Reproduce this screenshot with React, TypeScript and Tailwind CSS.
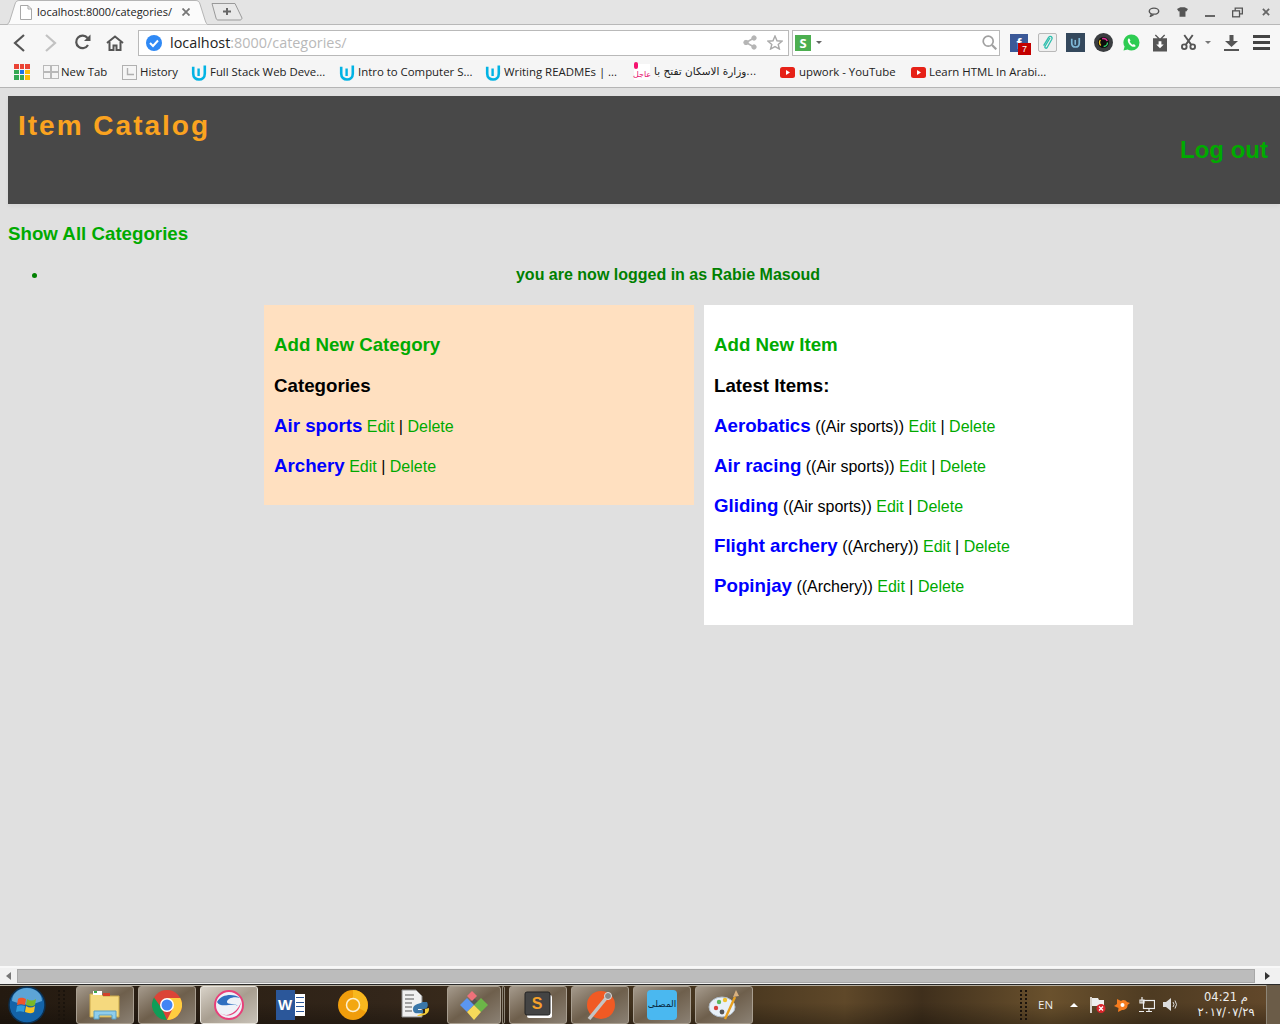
import React from 'react';

const uiFont = "font-['Open_Sans','Noto_Sans',sans-serif]";

const UdacityIcon = () => (
  <svg width="16" height="17" viewBox="0 0 16 17" className="shrink-0" fill="none" stroke="#02b3e4">
    <path d="M2.2 2.8 V9.5 C2.2 13.5 4.8 15.5 8 15.5 C11.2 15.5 13.8 13.5 13.8 9.5 V1.5" strokeWidth="2.6" />
    <path d="M7.6 4.5 V12" strokeWidth="2.4" />
  </svg>
);

const YoutubeIcon = () => (
  <svg width="15" height="11" viewBox="0 0 15 11" className="shrink-0">
    <rect width="15" height="11" rx="2.5" fill="#e62117" />
    <path d="M6 3 L10 5.5 L6 8 Z" fill="#fff" />
  </svg>
);

const AppsIcon = () => {
  const colors = ['#ea4335', '#ea4335', '#ea4335', '#34a853', '#1a73e8', '#fbbc05', '#34a853', '#34a853', '#fbbc05'];
  return (
    <div className="grid grid-cols-3 gap-[1px] w-4 h-4 shrink-0">
      {colors.map((c, i) => <div key={i} style={{ background: c }} />)}
    </div>
  );
};

const NewTabIcon = () => (
  <svg width="16" height="14" viewBox="0 0 16 14" className="shrink-0" fill="none" stroke="#b9b9b9">
    <rect x="0.5" y="0.5" width="7" height="6" />
    <rect x="8.5" y="0.5" width="7" height="6" />
    <rect x="0.5" y="7.5" width="7" height="6" />
    <rect x="8.5" y="7.5" width="7" height="6" />
  </svg>
);

const HistoryIcon = () => (
  <svg width="15" height="15" viewBox="0 0 15 15" className="shrink-0" fill="none" stroke="#b0b0b0">
    <rect x="0.5" y="0.5" width="14" height="14" />
    <path d="M5.5 3 V9.5 H12" strokeWidth="1.4" />
  </svg>
);

const PinkIcon = () => (
  <div className="relative w-[16px] h-[16px] bg-white flex items-end justify-center shrink-0 text-[8px] leading-[11px] text-[#e6116f] font-['DejaVu_Sans',sans-serif]">
    <div className="absolute left-0 top-[-2px] w-[4px] h-[7px] rounded-full bg-[#f5126f]" />
    عاجل
  </div>
);

const bookmarks = [
  { key: 'newtab', label: 'New Tab', icon: <NewTabIcon />, cls: 'w-[79px] gap-[2px]' },
  { key: 'history', label: 'History', icon: <HistoryIcon />, cls: 'w-[69px] gap-[3px]' },
  { key: 'fullstack', label: 'Full Stack Web Deve...', icon: <UdacityIcon />, cls: 'w-[148px] gap-[3px]' },
  { key: 'intro', label: 'Intro to Computer S...', icon: <UdacityIcon />, cls: 'w-[146px] gap-[3px]' },
  { key: 'readme', label: 'Writing READMEs | ...', icon: <UdacityIcon />, cls: 'w-[149px] gap-[3px]' },
  { key: 'arabic', label: 'وزارة الاسكان تفتح با...', icon: <PinkIcon />, cls: 'w-[146px] gap-[4px]' },
  { key: 'upwork', label: 'upwork - YouTube', icon: <YoutubeIcon />, cls: 'w-[131px] gap-[4px]' },
  { key: 'learn', label: 'Learn HTML In Arabi...', icon: <YoutubeIcon />, cls: 'gap-[3px]' },
];

const WindowControls = () => (
  <div className="ml-auto flex items-center h-full pr-[10px]">
    <svg width="12" height="10" viewBox="0 0 14 11" fill="none" stroke="#555" strokeWidth="1.7"><ellipse cx="7" cy="4.5" rx="5.5" ry="3.5" /><path d="M4 8 L3 10.5 L6.5 8.5" /></svg>
    <svg width="11" height="10" viewBox="0 0 13 11" className="ml-[17px]" fill="#555"><path d="M0 2 L4 0 H9 L13 2 L11 5 L10 4.5 V11 H3 V4.5 L2 5 Z" /></svg>
    <div className="w-[10px] h-[2px] bg-[#666] mt-[7px] ml-[17px]" />
    <svg width="11" height="11" viewBox="0 0 12 11" className="ml-[17px]" fill="none" stroke="#555" strokeWidth="1.4"><rect x="0.7" y="3.7" width="7.5" height="6.5" /><path d="M3.5 3.5 V0.7 H11.3 V7 H8.5" /></svg>
    <svg width="8" height="8" viewBox="0 0 9 9" className="ml-[19px]" stroke="#666" strokeWidth="2"><path d="M1 1 L8 8 M8 1 L1 8" /></svg>
  </div>
);

const TabStrip = () => (
  <div className="h-[24px] flex items-end bg-[#e4e4e4] pl-[5px]">
    <div className="relative w-[204px] h-[24px] flex items-center pl-[15px]">
      <svg width="204" height="25" viewBox="0 0 204 25" className="absolute left-0 top-0">
        <path d="M0 25 C3 25 4 23 5 20 L10 4 C11 1 12 0.5 15 0.5 H190 C193 0.5 194 1 195 4 L200 20 C201 23 202 25 204 25 Z" fill="#fbfbfb" stroke="#b5b5b5" />
      </svg>
      <svg width="12" height="15" viewBox="0 0 12 15" className="relative shrink-0" fill="#fff" stroke="#a8a8a8"><path d="M0.5 0.5 H8 L11.5 4 V14.5 H0.5 Z M8 0.5 V4 H11.5" /></svg>
      <span className={`relative ml-[5px] w-[140px] whitespace-nowrap text-[11px] text-[#222] ${uiFont}`}>localhost:8000/categories/</span>
      <svg width="8" height="8" viewBox="0 0 8 8" className="relative ml-[5px]" stroke="#777" strokeWidth="1.8"><path d="M0.5 0.5 L7.5 7.5 M7.5 0.5 L0.5 7.5" /></svg>
    </div>
    <svg width="32" height="18" viewBox="0 0 32 18" className="ml-[2px] mb-[3px]">
      <path d="M1 0.5 H24 L31 15 C31 16 30 17 29 17 H7 C6 17 5.5 16.5 5 15 Z" fill="#e8e8e8" stroke="#999" />
      <path d="M12 8.5 H20 M16 5 V12" stroke="#666" strokeWidth="2" />
    </svg>
    <WindowControls />
  </div>
);

const Toolbar = () => (
  <div className="h-[36px] flex items-center bg-[#f7f7f7] border-t border-[#b8b8b8] pl-[13px]">
    <svg width="12" height="18" viewBox="0 0 12 18" fill="none" stroke="#555" strokeWidth="2.2"><path d="M11 1 L2 9 L11 17" /></svg>
    <svg width="12" height="18" viewBox="0 0 12 18" className="ml-[20px]" fill="none" stroke="#c2c2c2" strokeWidth="2.2"><path d="M1 1 L10 9 L1 17" /></svg>
    <svg width="17" height="17" viewBox="0 0 17 17" className="ml-[17px]" fill="none" stroke="#555" strokeWidth="2.2"><path d="M14 11 A6.3 6.3 0 1 1 13.5 4" /><path d="M16.5 0.5 V7 H10 Z" fill="#555" stroke="none" /></svg>
    <svg width="18" height="16" viewBox="0 0 18 16" className="ml-[15px]" fill="none" stroke="#555" strokeWidth="2"><path d="M1 8 L9 1.5 L17 8" /><path d="M3.5 7 V15 H7.5 V10.5 H10.5 V15 H14.5 V7" /></svg>
    <div className="ml-[14px] w-[651px] h-[26px] flex items-center bg-white border border-[#b9b9b9] pl-[7px] pr-[5px]">
      <svg width="16" height="16" viewBox="0 0 16 16"><circle cx="8" cy="8" r="8" fill="#2f89f5" /><path d="M4 8 L7 11 L12 5.5" fill="none" stroke="#fff" strokeWidth="2" /></svg>
      <span className={`ml-[8px] text-[14.4px] text-[#222] ${uiFont}`}>localhost<span className="text-[#b9b9b9]">:8000/categories/</span></span>
      <svg width="14" height="15" viewBox="0 0 14 15" className="ml-auto" fill="#b5b5b5" stroke="#b5b5b5"><circle cx="11" cy="3" r="2.2" /><circle cx="3" cy="7.5" r="2.2" /><circle cx="11" cy="12" r="2.2" /><path d="M11 3 L3 7.5 L11 12" fill="none" strokeWidth="1.6" /></svg>
      <svg width="16" height="15" viewBox="0 0 16 15" className="ml-[10px]" fill="none" stroke="#a9a9a9" strokeWidth="1.4"><path d="M8 1 L10 5.8 L15 6.2 L11.2 9.4 L12.4 14 L8 11.6 L3.6 14 L4.8 9.4 L1 6.2 L6 5.8 Z" /></svg>
    </div>
    <div className="ml-[3px] w-[208px] h-[26px] flex items-center bg-white border border-[#b9b9b9] pl-[2px] pr-[2px]">
      <div className={`w-4 h-4 bg-[#4caf50] text-white text-[13px] font-bold leading-4 text-center ${uiFont}`}>S</div>
      <svg width="6" height="3" viewBox="0 0 6 3" className="ml-[5px]" fill="#666"><path d="M0 0 H6 L3 3 Z" /></svg>
      <svg width="15" height="15" viewBox="0 0 15 15" className="ml-auto" fill="none" stroke="#a0a0a0" strokeWidth="1.7"><circle cx="6.2" cy="6.2" r="5" /><path d="M10 10 L14.3 14.3" strokeWidth="2.2" /></svg>
    </div>
    <div className="ml-[10px] relative w-[18px] h-[18px] bg-[#3b5998] shrink-0 text-white text-[15px] font-bold leading-[20px] text-center font-['Liberation_Sans',sans-serif]">
      f
      <div className="absolute left-[8px] top-[9px] w-[13px] h-[12px] bg-[#c40000] text-[9px] leading-[12px] font-normal">7</div>
    </div>
    <div className="ml-[10px] w-[19px] h-[19px] rounded-[2px] border border-[#b9b9b9] bg-[#f0f0f0] flex items-center justify-center">
      <svg width="11" height="15" viewBox="0 0 11 15" fill="none" stroke="#2ebfae" strokeWidth="1.3"><path d="M8 3 L3.2 11 C2.2 13 4 14 5.2 12.5 L9.7 4.5 C11 2 8.2 0 6.6 2.4 L1.6 10.6" /></svg>
    </div>
    <div className="ml-[9px] w-[19px] h-[19px] bg-[#34485c] flex items-center justify-center">
      <svg width="11" height="11" viewBox="0 0 16 17" fill="none" stroke="#7fb8d6"><path d="M2.2 2.8 V9.5 C2.2 13.5 4.8 15.5 8 15.5 C11.2 15.5 13.8 13.5 13.8 9.5 V1.5" strokeWidth="2.6" /><path d="M7.6 4.5 V12" strokeWidth="2.4" /></svg>
    </div>
    <svg width="19" height="19" viewBox="0 0 19 19" className="ml-[9px]">
      <circle cx="9.5" cy="9.5" r="9.5" fill="#3a3d40" />
      <circle cx="9.5" cy="9.5" r="5.5" fill="#0c0c0c" />
      <circle cx="9.5" cy="9.5" r="4" fill="none" stroke="#2fd36b" strokeWidth="1.4" strokeDasharray="6 19" />
      <circle cx="9.5" cy="9.5" r="4" fill="none" stroke="#e0309a" strokeWidth="1.4" strokeDasharray="6 19" strokeDashoffset="8" />
      <circle cx="9.5" cy="9.5" r="4" fill="none" stroke="#f2c21d" strokeWidth="1.4" strokeDasharray="6 19" strokeDashoffset="16" />
    </svg>
    <svg width="17" height="17" viewBox="0 0 17 17" className="ml-[10px]">
      <path d="M8.5 0.5 A8 8 0 0 1 8.5 16.5 A8 8 0 0 1 4.6 15.5 L0.5 16.5 L1.6 12.6 A8 8 0 0 1 8.5 0.5 Z" fill="#2ecc52" />
      <path d="M5.5 4.5 C4 6 5 9 7 11 C9 13 11.5 13.5 12.8 12 L11 10 L9.8 10.8 C8.5 10.2 7 8.5 6.7 7.5 L7.5 6.5 L6.3 4.5 Z" fill="#fff" />
    </svg>
    <svg width="14" height="18" viewBox="0 0 15 18" className="ml-[13px]" fill="#555"><path d="M3 0 L7 4 H8 L12 0 L13 1 L10 4 H15 V18 H0 V4 H5 L2 1 Z" /><path d="M6 7 H9 V10.5 H11.5 L7.5 14.5 L3.5 10.5 H6 Z" fill="#fff" /></svg>
    <svg width="15" height="17" viewBox="0 0 16 17" className="ml-[14px]" fill="none" stroke="#555" strokeWidth="2"><circle cx="3.5" cy="13" r="2.5" /><circle cx="12.5" cy="13" r="2.5" /><path d="M5 11 L12.5 0.5 M11 11 L3.5 0.5" /></svg>
    <svg width="6" height="3" viewBox="0 0 6 3" className="ml-[9px]" fill="#777"><path d="M0 0 H6 L3 3 Z" /></svg>
    <svg width="15" height="16" viewBox="0 0 15 16" className="ml-[13px]" fill="#555"><path d="M5.5 0 H9.5 V6 H14 L7.5 12 L1 6 H5.5 Z" /><rect y="14" width="15" height="2" /></svg>
    <div className="ml-[14px] w-[17px] flex flex-col gap-[3px]">
      <div className="h-[3px] bg-[#444]" />
      <div className="h-[3px] bg-[#444]" />
      <div className="h-[3px] bg-[#444]" />
    </div>
  </div>
);

const BookmarksBar = () => (
  <div className="h-[28px] flex items-center bg-[#f5f5f5] border-b border-[#b5b5b5] pl-[14px] pb-[3px]">
    <div className="w-[29px]"><AppsIcon /></div>
    {bookmarks.map(b => (
      <div key={b.key} className={`flex items-center h-full ${b.cls}`}>
        {b.icon}
        <span className={`whitespace-nowrap text-[#222] ${b.key === 'arabic' ? "font-['DejaVu_Sans',sans-serif] text-[10.5px]" : `text-[11.4px] ${uiFont}`}`}>{b.label}</span>
      </div>
    ))}
  </div>
);

const CategoryRow = ({ name, parent }: { name: string; parent?: string }) => (
  <p className="mt-[17px] leading-[22px] text-[16px] text-black">
    <a className="text-[18.72px] font-bold text-[#0000ff]">{name}</a>{' '}
    {parent && <span>(({parent})) </span>}
    <a className="text-[#00aa00]">Edit</a> | <a className="text-[#00aa00]">Delete</a>
  </p>
);

const PageContent = () => (
  <div className="flex-1 overflow-hidden bg-[#e0e0e0] font-['Liberation_Sans',Arial,sans-serif]">
    <div className="w-[1288px] pl-[8px] pt-[8px]">
      <header className="h-[108px] w-[1272px] bg-[#484848] shadow-[0_2px_4px_rgba(0,0,0,0.05)] flex justify-between pl-[10px] pr-[12px]">
        <h1 className="mt-[14px] text-[28px] leading-[32px] font-bold tracking-[2px] text-[#fba31f]">Item Catalog</h1>
        <a className="self-center text-[24px] leading-[28px] font-bold text-[#00aa00] mt-[-1px]">Log out</a>
      </header>
      <a className="block mt-[18px] text-[18.72px] leading-[23px] font-bold text-[#00aa00]">Show All Categories</a>
      <ul className="mt-[21px] pl-[40px] list-disc text-[#008000]">
        <li className="text-center text-[16px] leading-[18px] font-bold">you are now logged in as Rabie Masoud</li>
      </ul>
      <div className="mt-[21px] ml-[256px] flex items-start gap-[10px]">
        <section className="w-[430px] h-[200px] bg-[#ffe0c0] px-[10px] pt-[29px]">
          <a className="block text-[18.72px] leading-[22px] font-bold text-[#00aa00]">Add New Category</a>
          <h2 className="mt-[19px] mb-[18px] text-[18.72px] leading-[22px] font-bold text-black">Categories</h2>
          <CategoryRow name="Air sports" />
          <CategoryRow name="Archery" />
        </section>
        <section className="w-[429px] h-[320px] bg-white px-[10px] pt-[29px]">
          <a className="block text-[18.72px] leading-[22px] font-bold text-[#00aa00]">Add New Item</a>
          <h2 className="mt-[19px] mb-[18px] text-[18.72px] leading-[22px] font-bold text-black">Latest Items:</h2>
          <CategoryRow name="Aerobatics" parent="Air sports" />
          <CategoryRow name="Air racing" parent="Air sports" />
          <CategoryRow name="Gliding" parent="Air sports" />
          <CategoryRow name="Flight archery" parent="Archery" />
          <CategoryRow name="Popinjay" parent="Archery" />
        </section>
      </div>
    </div>
  </div>
);

const ScrollBar = () => (
  <div className="h-[18px] flex items-center bg-[#f1f1f1] border-t-2 border-[#f8f8f8]">
    <div className="w-[17px] flex justify-center">
      <svg width="5" height="8" viewBox="0 0 5 8" fill="#777"><path d="M5 0 V8 L0 4 Z" /></svg>
    </div>
    <div className="w-[1238px] h-[14px] bg-[#bcbcbc] border border-[#a8a8a8]" />
    <div className="flex-1 flex justify-center">
      <svg width="5" height="8" viewBox="0 0 5 8" fill="#333"><path d="M0 0 V8 L5 4 Z" /></svg>
    </div>
  </div>
);

const taskBtn = 'h-[38px] rounded-[3px] border border-[#a89e90] bg-gradient-to-br from-[#a59a8c] via-[#6e5f4c] to-[#8b8174] flex items-center justify-center shrink-0';

const Grip = () => (
  <div className="grid grid-cols-2 gap-[2px] w-[8px] shrink-0">
    {Array.from({ length: 16 }).map((_, i) => <div key={i} className="w-[2px] h-[2px] bg-[#1a130c]" />)}
  </div>
);

const Taskbar = () => (
  <div className="h-[40px] flex items-center border-t border-[#2a2a2a] shadow-[inset_0_1px_0_#b5ae9f] bg-[linear-gradient(180deg,rgba(0,0,0,0)_45%,rgba(0,0,0,0.28)_100%),linear-gradient(90deg,#241a10_0%,#33261a_30%,#4a3820_58%,#5f4829_66%,#3f2f1c_72%,#6a512d_82%,#4e3b22_90%,#64492b_100%)] text-white">
    <svg width="38" height="38" viewBox="0 0 38 38" className="ml-[8px] shrink-0">
      <circle cx="19" cy="19" r="18" fill="#1463a8" stroke="#0c2f4e" strokeWidth="1.5" />
      <path d="M4 15 A15 13 0 0 1 34 15 Q19 22 4 15 Z" fill="#7cc0ea" opacity="0.7" />
      <path d="M10 13 C13 11 15 12 18 13 L17 19 C14 18 12 18 9 19 Z" fill="#f0552a" />
      <path d="M19 13 C22 15 25 15 28 13 L27 19 C24 21 21 20 18 19 Z" fill="#7ab829" />
      <path d="M9 20 C12 19 14 19 17 20 L16 26 C13 25 11 25 8 26 Z" fill="#2f9bdc" />
      <path d="M18 20 C21 22 24 22 27 20 L26 26 C23 28 20 27 17 26 Z" fill="#f7c325" />
    </svg>
    <div className="ml-[12px]"><Grip /></div>
    <div className={`${taskBtn} w-[58px] ml-[10px]`}>
      <svg width="32" height="30" viewBox="0 0 32 30">
        <path d="M1 4 H12 L14 6 H30 V27 H1 Z" fill="#f5d97e" stroke="#c9a84b" />
        <rect x="4" y="1" width="9" height="4" fill="#fff" />
        <rect x="5" y="1" width="3" height="2" fill="#3aa84a" />
        <rect x="14" y="3" width="7" height="3" fill="#d2402a" />
        <path d="M5 21 H27 V29 H23 V25 H10 V29 H5 Z" fill="#8fcdec" stroke="#5a9fc4" />
      </svg>
    </div>
    <div className={`${taskBtn} w-[58px] ml-[4px]`}>
      <svg width="30" height="30" viewBox="0 0 30 30">
        <circle cx="15" cy="15" r="15" fill="#db4437" />
        <path d="M15 30 A15 15 0 0 1 2 7.5 L9.5 18 L15 30 Z" fill="#0f9d58" />
        <path d="M28 7.5 A15 15 0 0 1 15 30 L21 18 L15 8 H28 Z" fill="#ffcd40" />
        <circle cx="15" cy="15" r="7" fill="#fff" />
        <circle cx="15" cy="15" r="5.5" fill="#4285f4" />
      </svg>
    </div>
    <div className="h-[38px] w-[58px] ml-[4px] rounded-[3px] border border-[#e8e4dc] bg-gradient-to-br from-[#d8d2c8] via-[#a89e90] to-[#c8c2b8] flex items-center justify-center shrink-0">
      <svg width="32" height="32" viewBox="0 0 32 32">
        <circle cx="16" cy="16" r="14" fill="#eef2f8" stroke="#e8407a" strokeWidth="2" />
        <path d="M4 13 C9 4 22 5 27 9 C20 7 14 10 14 13 C14 16 22 14 25 17 C20 13 8 20 4 13 Z" fill="#2f6fc0" />
        <path d="M7 24 C14 29 24 24 28 13 C27 22 18 31 7 24 Z" fill="#e8407a" />
      </svg>
    </div>
    <div className="w-[64px] flex justify-center shrink-0">
      <div className="flex items-center h-[30px]">
        <div className="w-[19px] h-[30px] bg-[#2b579a] text-white text-[15px] font-bold leading-[30px] text-center font-['Liberation_Sans',sans-serif]">W</div>
        <div className="w-[10px] h-[22px] bg-white flex flex-col justify-around px-[1px] py-[2px]">
          <div className="h-[1px] bg-[#2b579a]" /><div className="h-[1px] bg-[#2b579a]" /><div className="h-[1px] bg-[#2b579a]" /><div className="h-[1px] bg-[#2b579a]" />
        </div>
      </div>
    </div>
    <div className="w-[62px] flex justify-center shrink-0">
      <svg width="30" height="30" viewBox="0 0 30 30">
        <circle cx="15" cy="15" r="15" fill="#f09d0c" />
        <path d="M15 0 A15 15 0 0 1 28 22 L15 15 Z" fill="#f8b81e" />
        <circle cx="15" cy="15" r="6.5" fill="#f3a712" stroke="#fdf0cf" strokeWidth="1.5" />
      </svg>
    </div>
    <div className="w-[62px] flex justify-center shrink-0">
      <svg width="30" height="32" viewBox="0 0 30 32">
        <path d="M2 1 H16 L22 7 V28 H2 Z" fill="#f0f0f0" stroke="#888" />
        <path d="M5 6 H14 M5 10 H14 M5 14 H12 M5 18 H12 M5 22 H12" stroke="#555" />
        <path d="M13 20 C13 14 22 15 22 13 H27 C29 17 27 20 24 20 H18 V21 H23 V24 C19 24 13 26 13 20 Z" fill="#3a76a8" />
        <path d="M17 27 C22 27 30 26 29 19 L25 20 V24 C23 25 20 24 17 27 Z" fill="#f4cd3a" />
      </svg>
    </div>
    <div className={`${taskBtn} w-[54px] ml-[1px]`}>
      <svg width="32" height="32" viewBox="0 0 32 32">
        <path d="M16 9 L24 16 L16 24 L8 16 Z" fill="#555" />
        <path d="M16 1 L21 6 L16 11 L11 6 Z" fill="#f0717a" transform="translate(-2 1)" />
        <path d="M2 16 L9 9 L16 16 L9 23 Z" fill="#5b96f0" />
        <path d="M16 16 L23 9 L30 16 L23 23 Z" fill="#6cb548" />
        <path d="M9 23 L16 16 L23 23 L16 31 Z" fill="#f6d95a" />
      </svg>
    </div>
    <div className="w-[3px] h-[38px] ml-[1px] border border-[#8d8577] rounded-r-[2px] shrink-0" />
    <div className={`${taskBtn} w-[58px] ml-[4px]`}>
      <svg width="30" height="28" viewBox="0 0 30 28">
        <rect x="4" y="4" width="25" height="23" rx="2" fill="#fff" />
        <rect x="2" y="1" width="25" height="23" rx="2" fill="#444" stroke="#222" />
        <text x="14" y="18" textAnchor="middle" fontSize="16" fontWeight="700" fill="#f5a12b" fontFamily="Liberation Sans, sans-serif">S</text>
      </svg>
    </div>
    <div className={`${taskBtn} w-[58px] ml-[4px]`}>
      <svg width="30" height="32" viewBox="0 0 30 32">
        <circle cx="16" cy="16" r="14" fill="#f15a24" />
        <path d="M4 30 L22 8" stroke="#c4c4c4" strokeWidth="3.5" />
        <circle cx="23" cy="7" r="3.5" fill="#888" stroke="#ddd" />
      </svg>
    </div>
    <div className={`${taskBtn} w-[58px] ml-[4px]`}>
      <div className="w-[30px] h-[30px] rounded-[4px] bg-[#4ab8f0] flex items-center justify-center text-[9px] leading-none text-[#06263c] font-['DejaVu_Sans',sans-serif]">المصلى</div>
    </div>
    <div className={`${taskBtn} w-[58px] ml-[4px]`}>
      <svg width="32" height="32" viewBox="0 0 32 32">
        <ellipse cx="14" cy="18" rx="13" ry="10" fill="#e8f0f8" stroke="#b0bcc8" />
        <circle cx="8" cy="19" r="2.2" fill="#d8443c" />
        <circle cx="11" cy="13" r="2.2" fill="#5cb85c" />
        <circle cx="17" cy="11" r="2.2" fill="#f0c030" />
        <circle cx="14" cy="23" r="2.4" fill="#555" />
        <path d="M17 30 L27 8" stroke="#e8a020" strokeWidth="2.4" />
        <path d="M25 8 L28 1 L31 7 Z" fill="#d8b080" />
      </svg>
    </div>
    <div className="ml-auto flex items-center h-full">
      <Grip />
      <span className="ml-[10px] w-[14px] text-[11.5px] text-[#eee] font-['Open_Sans',sans-serif]">EN</span>
      <svg width="8" height="4" viewBox="0 0 8 4" className="ml-[18px]" fill="#fff"><path d="M4 0 L8 4 H0 Z" /></svg>
      <svg width="16" height="16" viewBox="0 0 16 16" className="ml-[12px]">
        <path d="M1 0 V16" stroke="#fff" strokeWidth="1.5" />
        <path d="M2 1 H8 L9 3 H14 V9 H2 Z" fill="#eee" />
        <circle cx="11" cy="11.5" r="4.5" fill="#d9252b" />
        <path d="M9 9.5 L13 13.5 M13 9.5 L9 13.5" stroke="#fff" strokeWidth="1.3" />
      </svg>
      <svg width="16" height="14" viewBox="0 0 16 14" className="ml-[8px]" fill="#f57c1f"><path d="M3 1 L7 3 C9 1 12 2 13 4 L16 5 L13.5 7 C14 10 11 12 8 12 L4 14 L4.5 10 L0 8 L3 6 Z" /><circle cx="8.5" cy="7" r="2" fill="#fff" /></svg>
      <svg width="16" height="15" viewBox="0 0 16 15" className="ml-[9px]" fill="none" stroke="#eee" strokeWidth="1.2"><rect x="4.5" y="3.5" width="11" height="8" /><path d="M3 0 V6 M1 3 H5 V6 H1 Z M7 14.5 H13 M10 11.5 V14.5 M0 14.5 H5" /></svg>
      <svg width="16" height="13" viewBox="0 0 16 13" className="ml-[8px]" fill="#ddd"><path d="M0 4 H3 L8 0 V13 L3 9 H0 Z" /><path d="M10 4 Q12 6.5 10 9 M12 2.5 Q15 6.5 12 10.5" fill="none" stroke="#ddd" /></svg>
      <div className="ml-[13px] w-[68px] text-center text-[#eee] font-['DejaVu_Sans',sans-serif]">
        <div dir="rtl" className="text-[11.5px] leading-[15px]">م 04:21</div>
        <div className="text-[11.5px] leading-[15px]">٢٠١٧/٠٧/٢٩</div>
      </div>
      <div className="ml-[6px] w-[14px] h-full border-l border-[#8d8577] bg-[#6b5c48]" />
    </div>
  </div>
);

const App: React.FC = () => {
  return (
    <div className="w-[1280px] h-[1024px] flex flex-col overflow-hidden">
      <TabStrip />
      <Toolbar />
      <BookmarksBar />
      <PageContent />
      <ScrollBar />
      <Taskbar />
    </div>
  );
};

export default App;
